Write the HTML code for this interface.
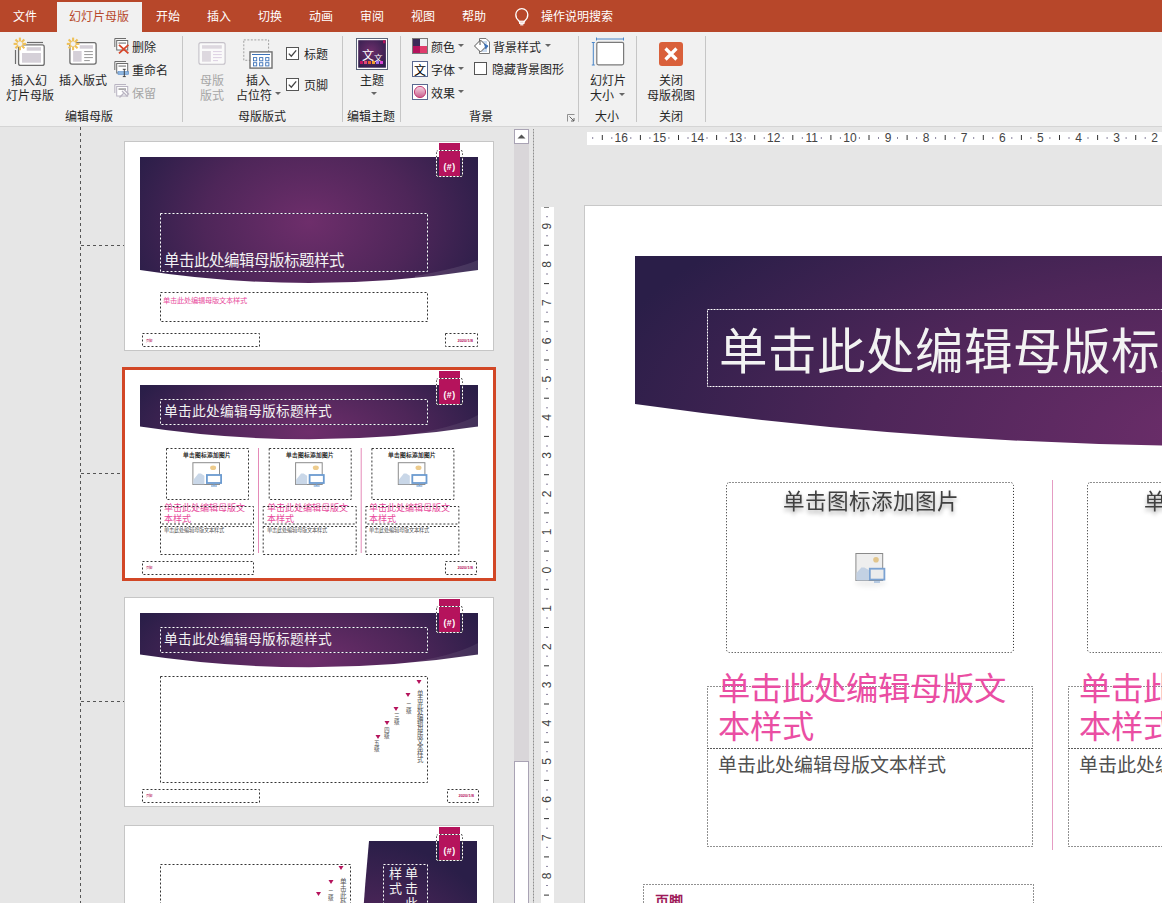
<!DOCTYPE html>
<html lang="zh-CN"><head><meta charset="utf-8">
<style>
*{margin:0;padding:0;box-sizing:border-box}
html,body{width:1162px;height:903px;overflow:hidden;background:#E6E6E6;font-family:"Liberation Sans",sans-serif}
.ab{position:absolute}
.t{position:absolute;white-space:nowrap;line-height:1}
.tab{position:absolute;top:0;height:32px;line-height:34px;color:#fff;font-size:12px;white-space:nowrap}
.rt{position:absolute;font-size:12px;line-height:15px;margin-top:2px;color:#262626;white-space:nowrap}
.sep{position:absolute;top:36px;width:1px;height:86px;background:#C6C6C6}
</style></head><body>

<div class="ab" style="left:0;top:0;width:1162px;height:32px;background:#B7472A"></div>
<div class="ab" style="left:57px;top:2px;width:85px;height:31px;background:#F1F1F1"></div>
<div class="tab" style="left:13px;top:0;color:#fff">文件</div>
<div class="tab" style="left:69px;top:0;color:#B7472A">幻灯片母版</div>
<div class="tab" style="left:156px;top:0;color:#fff">开始</div>
<div class="tab" style="left:207px;top:0;color:#fff">插入</div>
<div class="tab" style="left:258px;top:0;color:#fff">切换</div>
<div class="tab" style="left:309px;top:0;color:#fff">动画</div>
<div class="tab" style="left:360px;top:0;color:#fff">审阅</div>
<div class="tab" style="left:411px;top:0;color:#fff">视图</div>
<div class="tab" style="left:462px;top:0;color:#fff">帮助</div>
<div class="tab" style="left:541px;top:0;color:#fff">操作说明搜索</div>
<svg class="ab" style="left:512px;top:6px" width="20" height="22" viewBox="0 0 20 22">
<path d="M6.5 14.5 C4 12.5 3.8 10.5 3.8 8.6 A6 6 0 0 1 15.8 8.6 C15.8 10.5 15.6 12.5 13.1 14.5 L12 16.2 H7.6 Z" fill="none" stroke="#fff" stroke-width="1.3"/>
<rect x="7.6" y="15.2" width="4.4" height="2.2" fill="none" stroke="#fff" stroke-width="1.1"/>
<rect x="8.2" y="18.2" width="3.2" height="1.2" fill="#fff"/>
</svg>
<div class="ab" style="left:0;top:32px;width:1162px;height:94px;background:#F1F1F1"></div>
<div class="ab" style="left:0;top:126px;width:1162px;height:1px;background:#D5D5D5"></div>
<div class="sep" style="left:182px"></div>
<div class="sep" style="left:342px"></div>
<div class="sep" style="left:400px"></div>
<div class="sep" style="left:578px"></div>
<div class="sep" style="left:636px"></div>
<div class="sep" style="left:705px"></div>
<div class="rt" style="left:65px;top:108px;color:#262626">编辑母版</div>
<div class="rt" style="left:238px;top:108px;color:#262626">母版版式</div>
<div class="rt" style="left:347px;top:108px;color:#262626">编辑主题</div>
<div class="rt" style="left:469px;top:108px;color:#262626">背景</div>
<div class="rt" style="left:595px;top:108px;color:#262626">大小</div>
<div class="rt" style="left:659px;top:108px;color:#262626">关闭</div>
<div class="rt" style="left:11px;top:72px;color:#262626">插入幻</div>
<div class="rt" style="left:6px;top:87px;color:#262626">灯片母版</div>
<div class="rt" style="left:59px;top:72px;color:#262626">插入版式</div>
<div class="rt" style="left:132px;top:39px;color:#262626">删除</div>
<div class="rt" style="left:132px;top:62px;color:#262626">重命名</div>
<div class="rt" style="left:132px;top:85px;color:#A6A6A6">保留</div>
<div class="rt" style="left:200px;top:72px;color:#A6A6A6">母版</div>
<div class="rt" style="left:200px;top:87px;color:#A6A6A6">版式</div>
<div class="rt" style="left:246px;top:72px;color:#262626">插入</div>
<div class="rt" style="left:236px;top:87px;color:#262626">占位符</div>
<div class="rt" style="left:304px;top:46px;color:#262626">标题</div>
<div class="rt" style="left:304px;top:77px;color:#262626">页脚</div>
<div class="rt" style="left:360px;top:72px;color:#262626">主题</div>
<div class="rt" style="left:431px;top:39px;color:#262626">颜色</div>
<div class="rt" style="left:431px;top:62px;color:#262626">字体</div>
<div class="rt" style="left:431px;top:85px;color:#262626">效果</div>
<div class="rt" style="left:493px;top:39px;color:#262626">背景样式</div>
<div class="rt" style="left:492px;top:61px;color:#262626">隐藏背景图形</div>
<div class="rt" style="left:590px;top:72px;color:#262626">幻灯片</div>
<div class="rt" style="left:590px;top:87px;color:#262626">大小</div>
<div class="rt" style="left:659px;top:72px;color:#262626">关闭</div>
<div class="rt" style="left:647px;top:87px;color:#262626">母版视图</div>
<svg class="ab" style="left:275px;top:92px" width="6" height="4"><path d="M0 0 H6 L3 3 Z" fill="#666"/></svg>
<svg class="ab" style="left:371px;top:92px" width="6" height="4"><path d="M0 0 H6 L3 3 Z" fill="#666"/></svg>
<svg class="ab" style="left:458px;top:44px" width="6" height="4"><path d="M0 0 H6 L3 3 Z" fill="#666"/></svg>
<svg class="ab" style="left:458px;top:67px" width="6" height="4"><path d="M0 0 H6 L3 3 Z" fill="#666"/></svg>
<svg class="ab" style="left:458px;top:90px" width="6" height="4"><path d="M0 0 H6 L3 3 Z" fill="#666"/></svg>
<svg class="ab" style="left:545px;top:44px" width="6" height="4"><path d="M0 0 H6 L3 3 Z" fill="#666"/></svg>
<svg class="ab" style="left:619px;top:93px" width="6" height="4"><path d="M0 0 H6 L3 3 Z" fill="#666"/></svg>
<svg class="ab" style="left:286px;top:47px" width="13" height="13" viewBox="0 0 13 13"><rect x="0.5" y="0.5" width="12" height="12" fill="#fff" stroke="#555"/><path d="M2.8 6.6 L5.3 9.2 L10.2 3.4" fill="none" stroke="#444" stroke-width="1.3"/></svg>
<svg class="ab" style="left:286px;top:78px" width="13" height="13" viewBox="0 0 13 13"><rect x="0.5" y="0.5" width="12" height="12" fill="#fff" stroke="#555"/><path d="M2.8 6.6 L5.3 9.2 L10.2 3.4" fill="none" stroke="#444" stroke-width="1.3"/></svg>
<svg class="ab" style="left:474px;top:62px" width="13" height="13" viewBox="0 0 13 13"><rect x="0.5" y="0.5" width="12" height="12" fill="#fff" stroke="#555"/></svg>
<svg class="ab" style="left:0;top:32px" width="720" height="94" viewBox="0 32 720 94"><path d="M27 42.5 H43" stroke="#6D6D6D" stroke-width="1.2"/><path d="M15.5 50 V64" stroke="#6D6D6D" stroke-width="1.2"/><rect x="18.6" y="44.8" width="25.6" height="20.6" rx="2" fill="#fff" stroke="#6D6D6D" stroke-width="1.3"/><rect x="26.7" y="47.2" width="14.3" height="3.5" fill="#D5D0D8"/><rect x="22" y="53" width="19" height="9.7" fill="#D5D0D8"/><circle cx="19.9" cy="43.9" r="3.3" fill="#F1F1F1"/><line x1="22.30" y1="43.90" x2="26.20" y2="43.90" stroke="#EEC15A" stroke-width="2.1"/><line x1="21.60" y1="45.60" x2="24.35" y2="48.35" stroke="#EEC15A" stroke-width="2.1"/><line x1="19.90" y1="46.30" x2="19.90" y2="50.20" stroke="#EEC15A" stroke-width="2.1"/><line x1="18.20" y1="45.60" x2="15.45" y2="48.35" stroke="#EEC15A" stroke-width="2.1"/><line x1="17.50" y1="43.90" x2="13.60" y2="43.90" stroke="#EEC15A" stroke-width="2.1"/><line x1="18.20" y1="42.20" x2="15.45" y2="39.45" stroke="#EEC15A" stroke-width="2.1"/><line x1="19.90" y1="41.50" x2="19.90" y2="37.60" stroke="#EEC15A" stroke-width="2.1"/><line x1="21.60" y1="42.20" x2="24.35" y2="39.45" stroke="#EEC15A" stroke-width="2.1"/><rect x="69.9" y="42.7" width="26.2" height="21.4" rx="2" fill="#fff" stroke="#6D6D6D" stroke-width="1.3"/><rect x="79.7" y="45.2" width="13.2" height="3.5" fill="#D5D0D8"/><rect x="73.1" y="51" width="8.5" height="10.7" fill="#D5D0D8"/><path d="M84.2 51.6 H92.9 M84.2 54.6 H92.9 M84.2 57.6 H92.9 M84.2 60.6 H89.8" stroke="#8A8A8A" stroke-width="0.9"/><circle cx="73.1" cy="43.9" r="3.3" fill="#F1F1F1"/><line x1="75.50" y1="43.90" x2="79.40" y2="43.90" stroke="#EEC15A" stroke-width="2.1"/><line x1="74.80" y1="45.60" x2="77.55" y2="48.35" stroke="#EEC15A" stroke-width="2.1"/><line x1="73.10" y1="46.30" x2="73.10" y2="50.20" stroke="#EEC15A" stroke-width="2.1"/><line x1="71.40" y1="45.60" x2="68.65" y2="48.35" stroke="#EEC15A" stroke-width="2.1"/><line x1="70.70" y1="43.90" x2="66.80" y2="43.90" stroke="#EEC15A" stroke-width="2.1"/><line x1="71.40" y1="42.20" x2="68.65" y2="39.45" stroke="#EEC15A" stroke-width="2.1"/><line x1="73.10" y1="41.50" x2="73.10" y2="37.60" stroke="#EEC15A" stroke-width="2.1"/><line x1="74.80" y1="42.20" x2="77.55" y2="39.45" stroke="#EEC15A" stroke-width="2.1"/><path d="M114.8 47 V38.5 H126" fill="none" stroke="#6D6D6D" stroke-width="1"/><rect x="116.7" y="40.5" width="11" height="9.5" fill="#fff" stroke="#6D6D6D" stroke-width="1"/><rect x="118.5" y="42.3" width="7.5" height="1.6" fill="#A0A0A0"/><path d="M119 44.8 L128.4 53.4 M128.4 44.8 L119 53.4" stroke="#D9472B" stroke-width="1.8"/><path d="M114.8 70 V61.5 H126" fill="none" stroke="#6D6D6D" stroke-width="1"/><rect x="116.7" y="63.5" width="11" height="9.5" fill="#fff" stroke="#6D6D6D" stroke-width="1"/><rect x="118.5" y="65.3" width="7.5" height="1.6" fill="#A0A0A0"/><rect x="118" y="71.6" width="10.6" height="2.8" fill="#8DB6E0" stroke="#5B8BC8" stroke-width="0.6"/><path d="M122.8 69.3 H125.8 M124.3 69.3 V76.6 M122.8 76.6 H125.8" stroke="#333" stroke-width="0.9"/><path d="M114.8 93 V84.5 H126" fill="none" stroke="#B9B4C2" stroke-width="1"/><rect x="116.7" y="86.5" width="11" height="9.5" fill="#fff" stroke="#B9B4C2" stroke-width="1"/><rect x="118.5" y="88.3" width="7.5" height="1.6" fill="#A0A0A0"/><path d="M119.5 97.5 L123.5 93.5 M122 91 L127.5 96.5 M124 89.5 L129 94.5" stroke="#B9B4C2" stroke-width="1.3"/><rect x="198.9" y="42.6" width="26.2" height="21.6" rx="2" fill="#FAFAFA" stroke="#C4C0C8" stroke-width="1.1"/><rect x="202" y="45.2" width="19.8" height="3.5" fill="#DDD8DF"/><rect x="202" y="51" width="8.9" height="10.7" fill="#DDD8DF"/><path d="M213 51.6 H221.8 M213 54.6 H221.8 M213 57.6 H221.8 M213 60.6 H218" stroke="#D9CCE0" stroke-width="0.9"/><rect x="243.8" y="39.9" width="24.8" height="20.4" fill="none" stroke="#A0A0A0" stroke-width="1" stroke-dasharray="2 1.5"/><rect x="250" y="51.9" width="22" height="16.2" fill="#fff" stroke="#707070" stroke-width="1.4"/><path d="M252 54.5 H270" stroke="#3C72B8" stroke-width="1"/><rect x="253.5" y="57.6" width="3.2" height="3.2" fill="none" stroke="#3C72B8" stroke-width="0.9"/><rect x="253.5" y="62.699999999999996" width="3.2" height="3.2" fill="none" stroke="#3C72B8" stroke-width="0.9"/><rect x="259.59999999999997" y="57.6" width="3.2" height="3.2" fill="none" stroke="#3C72B8" stroke-width="0.9"/><rect x="259.59999999999997" y="62.699999999999996" width="3.2" height="3.2" fill="none" stroke="#3C72B8" stroke-width="0.9"/><rect x="265.7" y="57.6" width="3.2" height="3.2" fill="none" stroke="#3C72B8" stroke-width="0.9"/><rect x="265.7" y="62.699999999999996" width="3.2" height="3.2" fill="none" stroke="#3C72B8" stroke-width="0.9"/><defs><radialGradient id="th" cx="0.45" cy="0.4" r="0.7"><stop offset="0" stop-color="#6E2E6B"/><stop offset="1" stop-color="#2E1E4C"/></radialGradient></defs><rect x="356.5" y="38.5" width="31" height="31" fill="#fff" stroke="#5A6478" stroke-width="1"/><rect x="358.2" y="40.2" width="27.7" height="27.5" fill="url(#th)"/><rect x="383" y="40.2" width="2.4" height="3.1" fill="#B5135C"/><text x="362" y="60" font-size="12" fill="#fff">文</text><text x="374" y="60.5" font-size="8.5" fill="#fff">文</text><rect x="360" y="61" width="3" height="3" fill="#C0145F"/><rect x="364" y="61" width="3" height="3" fill="#E0457A"/><rect x="368" y="61" width="3" height="3" fill="#E8622D"/><rect x="372" y="61" width="3" height="3" fill="#F0A030"/><rect x="376" y="61" width="3" height="3" fill="#A070F0"/><rect x="380" y="61" width="3" height="3" fill="#D848D8"/><rect x="412.5" y="38.5" width="15" height="15" fill="#fff" stroke="#7A7A7A"/><rect x="413" y="39" width="7" height="7" fill="#3B2A58"/><rect x="420" y="39" width="7" height="7" fill="#ECEFF3"/><rect x="413" y="46" width="7" height="7" fill="#B5135C"/><rect x="420" y="46" width="7" height="7" fill="#E03C6C"/><rect x="412.5" y="61.5" width="15" height="15" fill="#fff" stroke="#5A6890"/><text x="414" y="74.5" font-size="12" fill="#000">文</text><defs><linearGradient id="ef" x1="0" y1="0" x2="0" y2="1"><stop offset="0" stop-color="#F6D8E4"/><stop offset="1" stop-color="#C85C8C"/></linearGradient></defs><rect x="412.5" y="84.5" width="15" height="15" fill="#fff" stroke="#5A6890"/><circle cx="420" cy="92" r="5.6" fill="url(#ef)" stroke="#C0306A" stroke-width="0.9"/><path d="M479.5 38.5 H486 L489.5 42 V53.5 H479.5 Z" fill="#fff" stroke="#777" stroke-width="1"/><rect x="482" y="41" width="5" height="11" fill="#C9DAEE"/><path d="M474.5 46 L480.5 40 L486.5 46 L480.5 52 Z" fill="#fff" stroke="#555" stroke-width="1"/><path d="M480 41 V45" stroke="#555" stroke-width="1"/><path d="M484 44 L488 46 L485.5 49" fill="#3C72B8" stroke="#3C72B8" stroke-width="1"/><path d="M596.5 39 H623.5 M596.5 37.5 V40.5 M623.5 37.5 V40.5" stroke="#4A86C8" stroke-width="1"/><path d="M593.3 42.5 V65 M591.8 42.5 H594.8 M591.8 65 H594.8" stroke="#4A86C8" stroke-width="1"/><rect x="596.8" y="42.3" width="26.8" height="22.5" rx="1.5" fill="#fff" stroke="#7A7A7A" stroke-width="1.2"/><rect x="659" y="42" width="24" height="24" rx="3" fill="#D9603B"/><path d="M665.5 48.5 L676.5 59.5 M676.5 48.5 L665.5 59.5" stroke="#fff" stroke-width="3.2"/><path d="M567.5 121.5 V114.5 H574.5" fill="none" stroke="#777" stroke-width="0.8"/><path d="M569.5 116.5 L574 121 M574 118 V121 H571" fill="none" stroke="#555" stroke-width="0.9"/></svg>
<div class="ab" style="left:0;top:127px;width:534px;height:776px;background:#E6E6E6"></div>
<svg class="ab" style="left:0;top:127px" width="125" height="776"><g stroke="#555" stroke-width="1" stroke-dasharray="3 3"><line x1="80.5" y1="0" x2="80.5" y2="776"/><line x1="81" y1="118.5" x2="124" y2="118.5"/><line x1="81" y1="346.5" x2="124" y2="346.5"/><line x1="81" y1="574.5" x2="124" y2="574.5"/></g></svg>
<div class="ab" style="left:124px;top:141px;width:370px;height:210px;background:#C6C6C6"></div>
<div class="ab" style="left:125px;top:142px;width:368px;height:208px;background:#fff;overflow:hidden">
<svg width="368" height="208" style="position:absolute;left:0;top:0"><defs>
<radialGradient id="g1" gradientUnits="userSpaceOnUse" cx="184" cy="80" r="190" gradientTransform="translate(184 80) scale(1 0.75) translate(-184 -80)">
<stop offset="0" stop-color="#6E2E6B"/><stop offset="0.55" stop-color="#4E2659"/><stop offset="1" stop-color="#2A1E48"/></radialGradient>
</defs><path d="M15 15 H353 V128 Q184 154 15 128 Z" fill="url(#g1)"/><path d="M290 134 Q335 126 353 118 V128 Q325 134 290 137 Z" fill="#fff" fill-opacity="0.10"/><rect x="314" y="1" width="21" height="33" fill="#B5135C"/><rect x="311.5" y="8.5" width="26" height="26" rx="1.5" fill="none" stroke="#444" stroke-width="1"/><rect x="311.5" y="8.5" width="26" height="26" rx="1.5" fill="none" stroke="#fff" stroke-width="1" stroke-dasharray="2 1.5"/><text x="324.5" y="27.7" font-size="8.8" font-weight="bold" fill="#fff" text-anchor="middle" letter-spacing="0.4">(#)</text><rect x="35.5" y="71.5" width="267" height="58" fill="none" stroke="#3A2A50" stroke-width="1"/><rect x="35.5" y="71.5" width="267" height="58" fill="none" stroke="#fff" stroke-width="1" stroke-dasharray="2 2"/><text x="38.5" y="124" font-size="15.45" fill="#F2F2F2" >单击此处编辑母版标题样式</text><rect x="35.5" y="150.5" width="267" height="29" fill="none" stroke="#333" stroke-width="1" stroke-dasharray="2 2"/><text x="38" y="161" font-size="7.25" fill="#E84C9D" >单击此处编辑母版文本样式</text><rect x="17.5" y="191.5" width="117" height="13" fill="none" stroke="#333" stroke-width="1" stroke-dasharray="2 2"/><text x="21" y="199.5" font-size="3.5" fill="#B5135C" >页脚</text><rect x="320.5" y="191.5" width="32" height="13" fill="none" stroke="#333" stroke-width="1" stroke-dasharray="2 2"/><text x="348" y="200" font-size="4" fill="#B5135C" text-anchor="end" font-weight="bold">2020/1/8</text></svg></div>
<div class="ab" style="left:122px;top:367px;width:374px;height:214px;background:#D24726"></div>
<div class="ab" style="left:125px;top:370px;width:368px;height:208px;background:#fff;overflow:hidden">
<svg width="368" height="208" style="position:absolute;left:0;top:0"><defs>
<radialGradient id="g2" gradientUnits="userSpaceOnUse" cx="184" cy="62" r="190" gradientTransform="translate(184 62) scale(1 0.45) translate(-184 -62)">
<stop offset="0" stop-color="#6E2E6B"/><stop offset="0.55" stop-color="#4E2659"/><stop offset="1" stop-color="#2A1E48"/></radialGradient>
</defs><path d="M15 15 H353 V56.5 Q184 82 15 56.5 Z" fill="url(#g2)"/><path d="M275 66 Q330 58 353 45 V56.5 Q320 64 275 68 Z" fill="#fff" fill-opacity="0.08"/><rect x="314" y="1" width="21" height="33" fill="#B5135C"/><rect x="311.5" y="8.5" width="26" height="26" rx="1.5" fill="none" stroke="#444" stroke-width="1"/><rect x="311.5" y="8.5" width="26" height="26" rx="1.5" fill="none" stroke="#fff" stroke-width="1" stroke-dasharray="2 1.5"/><text x="324.5" y="27.7" font-size="8.8" font-weight="bold" fill="#fff" text-anchor="middle" letter-spacing="0.4">(#)</text><rect x="35.5" y="29.5" width="267" height="25" fill="none" stroke="#3A2A50" stroke-width="1"/><rect x="35.5" y="29.5" width="267" height="25" fill="none" stroke="#fff" stroke-width="1" stroke-dasharray="2 2"/><text x="39" y="46" font-size="13.7" fill="#F2F2F2" >单击此处编辑母版标题样式</text><rect x="41.5" y="78.5" width="82.0" height="51" fill="none" stroke="#333" stroke-width="1" stroke-dasharray="2 2"/><text x="82.0" y="87" font-size="5.7" fill="#222" text-anchor="middle" font-weight="bold">单击图标添加图片</text><g transform="translate(67.4 92.2)"><rect x="0.5" y="0.5" width="26.6" height="21.8" fill="#fff" stroke="#8C8C8C" stroke-width="1"/><ellipse cx="20.7" cy="5.6" rx="3" ry="2.3" fill="#EDCB8C"/><path d="M1 22 V17.5 L6 11.3 H8.5 L12 13.5 V22 Z" fill="#C9D7E8"/><rect x="14.5" y="12.8" width="14.2" height="8" fill="#fff" stroke="#6C9BD0" stroke-width="1.8"/><path d="M18.6 23.8 H24.6" stroke="#6C9BD0" stroke-width="1.1"/><path d="M21.6 21.5 V23.5" stroke="#6C9BD0" stroke-width="1"/></g><text x="39.0" y="141" font-size="9.1" fill="#E84C9D" >单击此处编辑母版文</text><text x="39.0" y="151.5" font-size="9.1" fill="#E84C9D" >本样式</text><rect x="35.5" y="136.5" width="93.0" height="17.5" fill="none" stroke="#333" stroke-width="1" stroke-dasharray="2 2"/><rect x="35.5" y="156.5" width="93.0" height="28" fill="none" stroke="#333" stroke-width="1" stroke-dasharray="2 2"/><text x="39.0" y="161.5" font-size="5.2" fill="#555" >单击此处编辑母版文本样式</text><line x1="133.5" y1="78" x2="133.5" y2="183" stroke="#E58AB8" stroke-width="1"/><rect x="144.2" y="78.5" width="82.0" height="51" fill="none" stroke="#333" stroke-width="1" stroke-dasharray="2 2"/><text x="184.7" y="87" font-size="5.7" fill="#222" text-anchor="middle" font-weight="bold">单击图标添加图片</text><g transform="translate(170.10000000000002 92.2)"><rect x="0.5" y="0.5" width="26.6" height="21.8" fill="#fff" stroke="#8C8C8C" stroke-width="1"/><ellipse cx="20.7" cy="5.6" rx="3" ry="2.3" fill="#EDCB8C"/><path d="M1 22 V17.5 L6 11.3 H8.5 L12 13.5 V22 Z" fill="#C9D7E8"/><rect x="14.5" y="12.8" width="14.2" height="8" fill="#fff" stroke="#6C9BD0" stroke-width="1.8"/><path d="M18.6 23.8 H24.6" stroke="#6C9BD0" stroke-width="1.1"/><path d="M21.6 21.5 V23.5" stroke="#6C9BD0" stroke-width="1"/></g><text x="141.7" y="141" font-size="9.1" fill="#E84C9D" >单击此处编辑母版文</text><text x="141.7" y="151.5" font-size="9.1" fill="#E84C9D" >本样式</text><rect x="138.2" y="136.5" width="93.0" height="17.5" fill="none" stroke="#333" stroke-width="1" stroke-dasharray="2 2"/><rect x="138.2" y="156.5" width="93.0" height="28" fill="none" stroke="#333" stroke-width="1" stroke-dasharray="2 2"/><text x="141.7" y="161.5" font-size="5.2" fill="#555" >单击此处编辑母版文本样式</text><line x1="236.2" y1="78" x2="236.2" y2="183" stroke="#E58AB8" stroke-width="1"/><rect x="246.9" y="78.5" width="81.99999999999997" height="51" fill="none" stroke="#333" stroke-width="1" stroke-dasharray="2 2"/><text x="287.4" y="87" font-size="5.7" fill="#222" text-anchor="middle" font-weight="bold">单击图标添加图片</text><g transform="translate(272.8 92.2)"><rect x="0.5" y="0.5" width="26.6" height="21.8" fill="#fff" stroke="#8C8C8C" stroke-width="1"/><ellipse cx="20.7" cy="5.6" rx="3" ry="2.3" fill="#EDCB8C"/><path d="M1 22 V17.5 L6 11.3 H8.5 L12 13.5 V22 Z" fill="#C9D7E8"/><rect x="14.5" y="12.8" width="14.2" height="8" fill="#fff" stroke="#6C9BD0" stroke-width="1.8"/><path d="M18.6 23.8 H24.6" stroke="#6C9BD0" stroke-width="1.1"/><path d="M21.6 21.5 V23.5" stroke="#6C9BD0" stroke-width="1"/></g><text x="244.4" y="141" font-size="9.1" fill="#E84C9D" >单击此处编辑母版文</text><text x="244.4" y="151.5" font-size="9.1" fill="#E84C9D" >本样式</text><rect x="240.9" y="136.5" width="92.99999999999997" height="17.5" fill="none" stroke="#333" stroke-width="1" stroke-dasharray="2 2"/><rect x="240.9" y="156.5" width="92.99999999999997" height="28" fill="none" stroke="#333" stroke-width="1" stroke-dasharray="2 2"/><text x="244.4" y="161.5" font-size="5.2" fill="#555" >单击此处编辑母版文本样式</text><rect x="17.5" y="191.5" width="111" height="13" fill="none" stroke="#333" stroke-width="1" stroke-dasharray="2 2"/><text x="21" y="199" font-size="3.5" fill="#B5135C" >页脚</text><rect x="320.5" y="191.5" width="31" height="13" fill="none" stroke="#333" stroke-width="1" stroke-dasharray="2 2"/><text x="348" y="199" font-size="4" fill="#B5135C" text-anchor="end" font-weight="bold">2020/1/8</text></svg></div>
<div class="ab" style="left:124px;top:597px;width:370px;height:210px;background:#C6C6C6"></div>
<div class="ab" style="left:125px;top:598px;width:368px;height:208px;background:#fff;overflow:hidden">
<svg width="368" height="208" style="position:absolute;left:0;top:0"><defs>
<radialGradient id="g3" gradientUnits="userSpaceOnUse" cx="184" cy="62" r="190" gradientTransform="translate(184 62) scale(1 0.45) translate(-184 -62)">
<stop offset="0" stop-color="#6E2E6B"/><stop offset="0.55" stop-color="#4E2659"/><stop offset="1" stop-color="#2A1E48"/></radialGradient>
</defs><path d="M15 15 H353 V56.5 Q184 82 15 56.5 Z" fill="url(#g3)"/><path d="M275 66 Q330 58 353 45 V56.5 Q320 64 275 68 Z" fill="#fff" fill-opacity="0.08"/><rect x="314" y="1" width="21" height="33" fill="#B5135C"/><rect x="311.5" y="8.5" width="26" height="26" rx="1.5" fill="none" stroke="#444" stroke-width="1"/><rect x="311.5" y="8.5" width="26" height="26" rx="1.5" fill="none" stroke="#fff" stroke-width="1" stroke-dasharray="2 1.5"/><text x="324.5" y="27.7" font-size="8.8" font-weight="bold" fill="#fff" text-anchor="middle" letter-spacing="0.4">(#)</text><rect x="35.5" y="29.5" width="267" height="25" fill="none" stroke="#3A2A50" stroke-width="1"/><rect x="35.5" y="29.5" width="267" height="25" fill="none" stroke="#fff" stroke-width="1" stroke-dasharray="2 2"/><text x="39" y="46" font-size="13.7" fill="#F2F2F2" >单击此处编辑母版标题样式</text><rect x="35.5" y="78.5" width="267" height="106" fill="none" stroke="#333" stroke-width="1" stroke-dasharray="2 2"/><path d="M291.5 82 H296.5 L294 86 Z" fill="#B5135C"/><text x="294.5" y="92" font-size="6.4" fill="#555" style="writing-mode:vertical-rl" text-anchor="start">单击此处编辑母版文本样式</text><path d="M280.5 95 H285.5 L283 99 Z" fill="#B5135C"/><text x="283.5" y="104" font-size="5.6" fill="#555" style="writing-mode:vertical-rl" text-anchor="start">二级</text><path d="M268.5 109 H273.5 L271 113 Z" fill="#B5135C"/><text x="272" y="115" font-size="5.6" fill="#555" style="writing-mode:vertical-rl" text-anchor="start">三级</text><path d="M259.5 123 H264.5 L262 127 Z" fill="#B5135C"/><text x="262" y="129" font-size="5.6" fill="#555" style="writing-mode:vertical-rl" text-anchor="start">四级</text><path d="M250.5 137 H255.5 L253 141 Z" fill="#B5135C"/><text x="252" y="142" font-size="5.6" fill="#555" style="writing-mode:vertical-rl" text-anchor="start">五级</text><rect x="17.5" y="191.5" width="117" height="13" fill="none" stroke="#333" stroke-width="1" stroke-dasharray="2 2"/><text x="21" y="199" font-size="3.5" fill="#B5135C" >页脚</text><rect x="322.5" y="191.5" width="31" height="13" fill="none" stroke="#333" stroke-width="1" stroke-dasharray="2 2"/><text x="349" y="199" font-size="4" fill="#B5135C" text-anchor="end" font-weight="bold">2020/1/8</text></svg></div>
<div class="ab" style="left:124px;top:825px;width:370px;height:210px;background:#C6C6C6"></div>
<div class="ab" style="left:125px;top:826px;width:368px;height:208px;background:#fff;overflow:hidden">
<svg width="368" height="208" style="position:absolute;left:0;top:0"><defs>
<radialGradient id="g4" gradientUnits="userSpaceOnUse" cx="240" cy="190" r="160" gradientTransform="translate(240 190) scale(1 1.1) translate(-240 -190)">
<stop offset="0" stop-color="#6E2E6B"/><stop offset="0.55" stop-color="#4E2659"/><stop offset="1" stop-color="#2A1E48"/></radialGradient>
</defs><path d="M244 15 H352 V193 H232 Q236 100 244 15 Z" fill="url(#g4)"/><rect x="314" y="1" width="21" height="33" fill="#B5135C"/><rect x="311.5" y="8.5" width="26" height="26" rx="1.5" fill="none" stroke="#444" stroke-width="1"/><rect x="311.5" y="8.5" width="26" height="26" rx="1.5" fill="none" stroke="#fff" stroke-width="1" stroke-dasharray="2 1.5"/><text x="324.5" y="27.7" font-size="8.8" font-weight="bold" fill="#fff" text-anchor="middle" letter-spacing="0.4">(#)</text><rect x="258.5" y="38.5" width="44" height="162" fill="none" stroke="#3A2A50" stroke-width="1"/><rect x="258.5" y="38.5" width="44" height="162" fill="none" stroke="#fff" stroke-width="1" stroke-dasharray="2 2"/><text x="280" y="52" font-size="13" fill="#F2F2F2" >单</text><text x="280" y="67" font-size="13" fill="#F2F2F2" >击</text><text x="280" y="82" font-size="13" fill="#F2F2F2" >此</text><text x="280" y="97" font-size="13" fill="#F2F2F2" >处</text><text x="264" y="52" font-size="13" fill="#F2F2F2" >样</text><text x="264" y="67" font-size="13" fill="#F2F2F2" >式</text><rect x="35.5" y="38.5" width="190" height="162" fill="none" stroke="#333" stroke-width="1" stroke-dasharray="2 2"/><path d="M213.5 40 H218.5 L216 44 Z" fill="#B5135C"/><text x="217" y="52" font-size="6.6" fill="#555" style="writing-mode:vertical-rl">单击此处编辑</text><path d="M203.5 54 H208.5 L206 58 Z" fill="#B5135C"/><text x="206" y="63" font-size="5.6" fill="#555" style="writing-mode:vertical-rl">二级</text><path d="M191 66 H196 L193.5 70 Z" fill="#B5135C"/></svg></div>
<div class="ab" style="left:514px;top:129px;width:15px;height:774px;background:#D9D6D9"></div>
<div class="ab" style="left:514px;top:129px;width:15px;height:15px;background:#fff;border:1px solid #A9A3B4"></div>
<svg class="ab" style="left:516px;top:133px" width="11" height="7"><path d="M1.5 5.5 H9.5 L5.5 1.5 Z" fill="#555"/></svg>
<div class="ab" style="left:514px;top:761px;width:15px;height:150px;background:#fff;border:1px solid #A9A3B4"></div>
<svg class="ab" style="left:533px;top:129px" width="1" height="774"><line x1="0.5" y1="0" x2="0.5" y2="774" stroke="#BBBBBB"/><line x1="0.5" y1="0" x2="0.5" y2="774" stroke="#8E8E8E" stroke-dasharray="1 2"/></svg>
<svg class="ab" style="left:587px;top:132px" width="575" height="13"><rect width="575" height="13" fill="#fff"/><rect x="5.2" y="5" width="1" height="2" fill="#8C86A0"/><rect x="14.8" y="3" width="1" height="5" fill="#333"/><rect x="24.3" y="5" width="1" height="2" fill="#8C86A0"/><text x="34.3" y="9.6" font-size="12" fill="#444" text-anchor="middle">16</text><rect x="43.3" y="5" width="1" height="2" fill="#8C86A0"/><rect x="52.9" y="3" width="1" height="5" fill="#333"/><rect x="62.4" y="5" width="1" height="2" fill="#8C86A0"/><text x="72.4" y="9.6" font-size="12" fill="#444" text-anchor="middle">15</text><rect x="81.4" y="5" width="1" height="2" fill="#8C86A0"/><rect x="91.0" y="3" width="1" height="5" fill="#333"/><rect x="100.5" y="5" width="1" height="2" fill="#8C86A0"/><text x="110.5" y="9.6" font-size="12" fill="#444" text-anchor="middle">14</text><rect x="119.5" y="5" width="1" height="2" fill="#8C86A0"/><rect x="129.1" y="3" width="1" height="5" fill="#333"/><rect x="138.6" y="5" width="1" height="2" fill="#8C86A0"/><text x="148.6" y="9.6" font-size="12" fill="#444" text-anchor="middle">13</text><rect x="157.6" y="5" width="1" height="2" fill="#8C86A0"/><rect x="167.2" y="3" width="1" height="5" fill="#333"/><rect x="176.7" y="5" width="1" height="2" fill="#8C86A0"/><text x="186.7" y="9.6" font-size="12" fill="#444" text-anchor="middle">12</text><rect x="195.7" y="5" width="1" height="2" fill="#8C86A0"/><rect x="205.3" y="3" width="1" height="5" fill="#333"/><rect x="214.8" y="5" width="1" height="2" fill="#8C86A0"/><text x="224.8" y="9.6" font-size="12" fill="#444" text-anchor="middle">11</text><rect x="233.8" y="5" width="1" height="2" fill="#8C86A0"/><rect x="243.4" y="3" width="1" height="5" fill="#333"/><rect x="252.9" y="5" width="1" height="2" fill="#8C86A0"/><text x="262.9" y="9.6" font-size="12" fill="#444" text-anchor="middle">10</text><rect x="271.9" y="5" width="1" height="2" fill="#8C86A0"/><rect x="281.5" y="3" width="1" height="5" fill="#333"/><rect x="291.0" y="5" width="1" height="2" fill="#8C86A0"/><text x="301.0" y="9.6" font-size="12" fill="#444" text-anchor="middle">9</text><rect x="310.0" y="5" width="1" height="2" fill="#8C86A0"/><rect x="319.6" y="3" width="1" height="5" fill="#333"/><rect x="329.1" y="5" width="1" height="2" fill="#8C86A0"/><text x="339.1" y="9.6" font-size="12" fill="#444" text-anchor="middle">8</text><rect x="348.1" y="5" width="1" height="2" fill="#8C86A0"/><rect x="357.7" y="3" width="1" height="5" fill="#333"/><rect x="367.2" y="5" width="1" height="2" fill="#8C86A0"/><text x="377.2" y="9.6" font-size="12" fill="#444" text-anchor="middle">7</text><rect x="386.2" y="5" width="1" height="2" fill="#8C86A0"/><rect x="395.8" y="3" width="1" height="5" fill="#333"/><rect x="405.3" y="5" width="1" height="2" fill="#8C86A0"/><text x="415.3" y="9.6" font-size="12" fill="#444" text-anchor="middle">6</text><rect x="424.3" y="5" width="1" height="2" fill="#8C86A0"/><rect x="433.9" y="3" width="1" height="5" fill="#333"/><rect x="443.4" y="5" width="1" height="2" fill="#8C86A0"/><text x="453.4" y="9.6" font-size="12" fill="#444" text-anchor="middle">5</text><rect x="462.4" y="5" width="1" height="2" fill="#8C86A0"/><rect x="472.0" y="3" width="1" height="5" fill="#333"/><rect x="481.5" y="5" width="1" height="2" fill="#8C86A0"/><text x="491.5" y="9.6" font-size="12" fill="#444" text-anchor="middle">4</text><rect x="500.5" y="5" width="1" height="2" fill="#8C86A0"/><rect x="510.1" y="3" width="1" height="5" fill="#333"/><rect x="519.6" y="5" width="1" height="2" fill="#8C86A0"/><text x="529.6" y="9.6" font-size="12" fill="#444" text-anchor="middle">3</text><rect x="538.6" y="5" width="1" height="2" fill="#8C86A0"/><rect x="548.2" y="3" width="1" height="5" fill="#333"/><rect x="557.7" y="5" width="1" height="2" fill="#8C86A0"/><text x="567.7" y="9.6" font-size="12" fill="#444" text-anchor="middle">2</text></svg>
<svg class="ab" style="left:541px;top:207px" width="13" height="696"><rect width="13" height="696" fill="#fff"/><rect x="3" y="-0.4" width="5" height="1" fill="#333"/><rect x="5" y="9.2" width="2" height="1" fill="#8C86A0"/><text x="0" y="0" font-size="12" fill="#444" text-anchor="middle" transform="translate(9.6 19.2) rotate(-90)">9</text><rect x="5" y="28.3" width="2" height="1" fill="#8C86A0"/><rect x="3" y="37.8" width="5" height="1" fill="#333"/><rect x="5" y="47.4" width="2" height="1" fill="#8C86A0"/><text x="0" y="0" font-size="12" fill="#444" text-anchor="middle" transform="translate(9.6 57.4) rotate(-90)">8</text><rect x="5" y="66.5" width="2" height="1" fill="#8C86A0"/><rect x="3" y="76.1" width="5" height="1" fill="#333"/><rect x="5" y="85.6" width="2" height="1" fill="#8C86A0"/><text x="0" y="0" font-size="12" fill="#444" text-anchor="middle" transform="translate(9.6 95.7) rotate(-90)">7</text><rect x="5" y="104.7" width="2" height="1" fill="#8C86A0"/><rect x="3" y="114.3" width="5" height="1" fill="#333"/><rect x="5" y="123.8" width="2" height="1" fill="#8C86A0"/><text x="0" y="0" font-size="12" fill="#444" text-anchor="middle" transform="translate(9.6 133.9) rotate(-90)">6</text><rect x="5" y="142.9" width="2" height="1" fill="#8C86A0"/><rect x="3" y="152.5" width="5" height="1" fill="#333"/><rect x="5" y="162.0" width="2" height="1" fill="#8C86A0"/><text x="0" y="0" font-size="12" fill="#444" text-anchor="middle" transform="translate(9.6 172.1) rotate(-90)">5</text><rect x="5" y="181.2" width="2" height="1" fill="#8C86A0"/><rect x="3" y="190.7" width="5" height="1" fill="#333"/><rect x="5" y="200.3" width="2" height="1" fill="#8C86A0"/><text x="0" y="0" font-size="12" fill="#444" text-anchor="middle" transform="translate(9.6 210.3) rotate(-90)">4</text><rect x="5" y="219.4" width="2" height="1" fill="#8C86A0"/><rect x="3" y="228.9" width="5" height="1" fill="#333"/><rect x="5" y="238.5" width="2" height="1" fill="#8C86A0"/><text x="0" y="0" font-size="12" fill="#444" text-anchor="middle" transform="translate(9.6 248.5) rotate(-90)">3</text><rect x="5" y="257.6" width="2" height="1" fill="#8C86A0"/><rect x="3" y="267.2" width="5" height="1" fill="#333"/><rect x="5" y="276.7" width="2" height="1" fill="#8C86A0"/><text x="0" y="0" font-size="12" fill="#444" text-anchor="middle" transform="translate(9.6 286.8) rotate(-90)">2</text><rect x="5" y="295.8" width="2" height="1" fill="#8C86A0"/><rect x="3" y="305.4" width="5" height="1" fill="#333"/><rect x="5" y="314.9" width="2" height="1" fill="#8C86A0"/><text x="0" y="0" font-size="12" fill="#444" text-anchor="middle" transform="translate(9.6 325.0) rotate(-90)">1</text><rect x="5" y="334.0" width="2" height="1" fill="#8C86A0"/><rect x="3" y="343.6" width="5" height="1" fill="#333"/><rect x="5" y="353.1" width="2" height="1" fill="#8C86A0"/><text x="0" y="0" font-size="12" fill="#444" text-anchor="middle" transform="translate(9.6 363.2) rotate(-90)">0</text><rect x="5" y="372.3" width="2" height="1" fill="#8C86A0"/><rect x="3" y="381.8" width="5" height="1" fill="#333"/><rect x="5" y="391.4" width="2" height="1" fill="#8C86A0"/><text x="0" y="0" font-size="12" fill="#444" text-anchor="middle" transform="translate(9.6 401.4) rotate(-90)">1</text><rect x="5" y="410.5" width="2" height="1" fill="#8C86A0"/><rect x="3" y="420.0" width="5" height="1" fill="#333"/><rect x="5" y="429.6" width="2" height="1" fill="#8C86A0"/><text x="0" y="0" font-size="12" fill="#444" text-anchor="middle" transform="translate(9.6 439.6) rotate(-90)">2</text><rect x="5" y="448.7" width="2" height="1" fill="#8C86A0"/><rect x="3" y="458.3" width="5" height="1" fill="#333"/><rect x="5" y="467.8" width="2" height="1" fill="#8C86A0"/><text x="0" y="0" font-size="12" fill="#444" text-anchor="middle" transform="translate(9.6 477.9) rotate(-90)">3</text><rect x="5" y="486.9" width="2" height="1" fill="#8C86A0"/><rect x="3" y="496.5" width="5" height="1" fill="#333"/><rect x="5" y="506.0" width="2" height="1" fill="#8C86A0"/><text x="0" y="0" font-size="12" fill="#444" text-anchor="middle" transform="translate(9.6 516.1) rotate(-90)">4</text><rect x="5" y="525.1" width="2" height="1" fill="#8C86A0"/><rect x="3" y="534.7" width="5" height="1" fill="#333"/><rect x="5" y="544.2" width="2" height="1" fill="#8C86A0"/><text x="0" y="0" font-size="12" fill="#444" text-anchor="middle" transform="translate(9.6 554.3) rotate(-90)">5</text><rect x="5" y="563.4" width="2" height="1" fill="#8C86A0"/><rect x="3" y="572.9" width="5" height="1" fill="#333"/><rect x="5" y="582.5" width="2" height="1" fill="#8C86A0"/><text x="0" y="0" font-size="12" fill="#444" text-anchor="middle" transform="translate(9.6 592.5) rotate(-90)">6</text><rect x="5" y="601.6" width="2" height="1" fill="#8C86A0"/><rect x="3" y="611.1" width="5" height="1" fill="#333"/><rect x="5" y="620.7" width="2" height="1" fill="#8C86A0"/><text x="0" y="0" font-size="12" fill="#444" text-anchor="middle" transform="translate(9.6 630.7) rotate(-90)">7</text><rect x="5" y="639.8" width="2" height="1" fill="#8C86A0"/><rect x="3" y="649.4" width="5" height="1" fill="#333"/><rect x="5" y="658.9" width="2" height="1" fill="#8C86A0"/><text x="0" y="0" font-size="12" fill="#444" text-anchor="middle" transform="translate(9.6 669.0) rotate(-90)">8</text><rect x="5" y="678.0" width="2" height="1" fill="#8C86A0"/><rect x="3" y="687.6" width="5" height="1" fill="#333"/></svg>
<div class="ab" style="left:584px;top:205px;width:600px;height:700px;background:#C8C8C8"></div>
<svg class="ab" style="left:585px;top:206px" width="577" height="697" viewBox="0 0 577 697"><defs>
<radialGradient id="g9" gradientUnits="userSpaceOnUse" cx="646" cy="230" r="660" gradientTransform="translate(646 230) scale(1 0.45) translate(-646 -230)">
<stop offset="0" stop-color="#6E2E6B"/><stop offset="0.55" stop-color="#4E2659"/><stop offset="1" stop-color="#2A1E48"/></radialGradient>
</defs><rect width="577" height="697" fill="#fff"/><path d="M50 50 H1242 V198 Q646 282 50 198 Z" fill="url(#g9)"/><rect x="122.5" y="103.5" width="940" height="77" fill="none" stroke="#fff" stroke-width="1" stroke-dasharray="2 1"/><text x="134" y="163" font-size="48.5" fill="#F2F2F2">单击此处编辑母版标题样式</text><rect x="141.5" y="276.5" width="287" height="170" rx="3" fill="none" stroke="#222" stroke-width="1" stroke-dasharray="1 2"/><text x="285.5" y="302.5" font-size="21.6" fill="#404040" text-anchor="middle" style="filter:drop-shadow(0 3px 2px rgba(0,0,0,.35))">单击图标添加图片</text><g transform="translate(270.4 347)"><ellipse cx="15" cy="30" rx="16" ry="4" fill="#000" fill-opacity="0.06" style="filter:blur(2px)"/><rect x="0.5" y="0.5" width="26.8" height="27" fill="#EEEEEE" stroke="#8A8A8A" stroke-width="1"/><circle cx="20.6" cy="6.8" r="2.8" fill="#E2C58C"/><path d="M1 27.5 V20 L6 14.5 H9 L13.4 17 V27.5 Z" fill="#C3D1E3"/><rect x="14.4" y="15.7" width="14.6" height="10.9" fill="#ECECEC" stroke="#7BA2D2" stroke-width="1.8"/><path d="M18.6 29 H24.6" stroke="#7BA2D2" stroke-width="1"/></g><rect x="122.5" y="480.5" width="325" height="62" fill="none" stroke="#222" stroke-width="1" stroke-dasharray="1 2"/><rect x="122.5" y="542.5" width="325" height="98" fill="none" stroke="#222" stroke-width="1" stroke-dasharray="1 2"/><text x="133" y="494" font-size="32.3" fill="#EA4EA3">单击此处编辑母版文</text><text x="133" y="532" font-size="32.3" fill="#EA4EA3">本样式</text><text x="133" y="566" font-size="19" fill="#505050">单击此处编辑母版文本样式</text><line x1="467.5" y1="274" x2="467.5" y2="644" stroke="#E59CC3" stroke-width="1"/><rect x="502.5" y="276.5" width="287" height="170" rx="3" fill="none" stroke="#222" stroke-width="1" stroke-dasharray="1 2"/><text x="646.5" y="302.5" font-size="21.6" fill="#404040" text-anchor="middle" style="filter:drop-shadow(0 3px 2px rgba(0,0,0,.35))">单击图标添加图片</text><g transform="translate(631.4 347)"><ellipse cx="15" cy="30" rx="16" ry="4" fill="#000" fill-opacity="0.06" style="filter:blur(2px)"/><rect x="0.5" y="0.5" width="26.8" height="27" fill="#EEEEEE" stroke="#8A8A8A" stroke-width="1"/><circle cx="20.6" cy="6.8" r="2.8" fill="#E2C58C"/><path d="M1 27.5 V20 L6 14.5 H9 L13.4 17 V27.5 Z" fill="#C3D1E3"/><rect x="14.4" y="15.7" width="14.6" height="10.9" fill="#ECECEC" stroke="#7BA2D2" stroke-width="1.8"/><path d="M18.6 29 H24.6" stroke="#7BA2D2" stroke-width="1"/></g><rect x="483.5" y="480.5" width="325" height="62" fill="none" stroke="#222" stroke-width="1" stroke-dasharray="1 2"/><rect x="483.5" y="542.5" width="325" height="98" fill="none" stroke="#222" stroke-width="1" stroke-dasharray="1 2"/><text x="494" y="494" font-size="32.3" fill="#EA4EA3">单击此处编辑母版文</text><text x="494" y="532" font-size="32.3" fill="#EA4EA3">本样式</text><text x="494" y="566" font-size="19" fill="#505050">单击此处编辑母版文本样式</text><line x1="828.5" y1="274" x2="828.5" y2="644" stroke="#E59CC3" stroke-width="1"/><rect x="58.5" y="678.5" width="390" height="60" fill="none" stroke="#222" stroke-width="1" stroke-dasharray="1 2"/><text x="70" y="700" font-size="14" font-weight="bold" fill="#9E1A5A">页脚</text></svg>
</body></html>
